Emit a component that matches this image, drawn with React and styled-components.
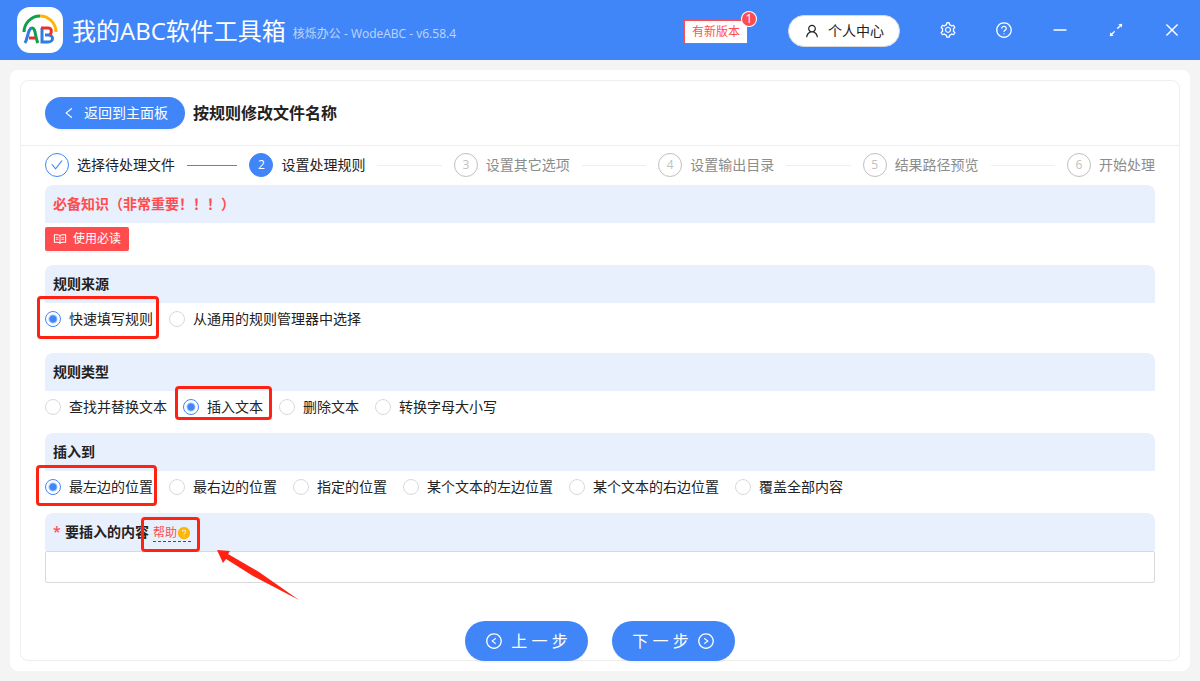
import React, { useState } from "react";
import styled, { createGlobalStyle } from "styled-components";
import {
  AiOutlineArrowsAlt,
  AiOutlineCheck,
  AiOutlineClose,
  AiOutlineLeft,
  AiOutlineLeftCircle,
  AiOutlineMinus,
  AiOutlineQuestionCircle,
  AiOutlineRead,
  AiOutlineRightCircle,
  AiOutlineSetting,
  AiOutlineUser,
  AiFillQuestionCircle,
} from "react-icons/ai";

const steps = [
  "选择待处理文件",
  "设置处理规则",
  "设置其它选项",
  "设置输出目录",
  "结果路径预览",
  "开始处理",
];

const sources = ["快速填写规则", "从通用的规则管理器中选择"];
const types = ["查找并替换文本", "插入文本", "删除文本", "转换字母大小写"];
const positions = [
  "最左边的位置",
  "最右边的位置",
  "指定的位置",
  "某个文本的左边位置",
  "某个文本的右边位置",
  "覆盖全部内容",
];

const Logo = () => (
  <LogoBox>
    <svg width="46" height="46" viewBox="0 0 46 46" fill="none" strokeWidth="3">
      <path d="M7 25 A16 16 0 0 1 23 9" stroke="#0fa04b" />
      <path d="M23 9 A16 16 0 0 1 39 25" stroke="#fbb606" />
      <path d="M8 36 C11 31 11 21 15 21" stroke="#2f7de1" />
      <path d="M15 21 C19 21 18 31 21 36" stroke="#0fa04b" />
      <path d="M12 31 H18" stroke="#ea2f2f" />
      <path d="M25 21 V35 H31 C37 35 37 28 31 28 H28" stroke="#2f7de1" />
      <path d="M24 21 H31 C35 21 35 25 33 28" stroke="#ea2f2f" />
    </svg>
  </LogoBox>
);

const RadioRow = ({ name, options, initial, mark, gap = 10 }) => {
  const [value, setValue] = useState(initial);
  return (
    <Row $gap={gap}>
      {options.map((option) => (
        <RadioLabel key={option}>
          <Radio
            type="radio"
            name={name}
            checked={value === option}
            onChange={() => setValue(option)}
          />
          {option}
          {option === initial && <Mark $inset={mark} />}
        </RadioLabel>
      ))}
    </Row>
  );
};

const App = () => (
  <>
    <GlobalStyle />
    <TopBar>
      <Logo />
      <AppName>我的ABC软件工具箱</AppName>
      <Version>核烁办公 - WodeABC - v6.58.4</Version>
      <UpdateButton type="button">
        有新版本
        <Count>1</Count>
      </UpdateButton>
      <UserButton type="button">
        <AiOutlineUser size={16} />
        个人中心
      </UserButton>
      <IconButton type="button" aria-label="设置"><AiOutlineSetting /></IconButton>
      <IconButton type="button" aria-label="帮助"><AiOutlineQuestionCircle /></IconButton>
      <IconButton type="button" aria-label="最小化"><AiOutlineMinus /></IconButton>
      <IconButton type="button" aria-label="最大化"><AiOutlineArrowsAlt /></IconButton>
      <IconButton type="button" aria-label="关闭"><AiOutlineClose /></IconButton>
    </TopBar>
    <Page>
      <Card>
        <CardHead>
          <BackButton type="button">
            <AiOutlineLeft size={14} />
            返回到主面板
          </BackButton>
          <Title>按规则修改文件名称</Title>
        </CardHead>
        <CardBody>
          <Steps>
            {steps.map((step, i) => (
              <Step key={step}>
                <StepIcon $done={i === 0} $active={i === 1}>
                  {i === 0 ? <AiOutlineCheck size={14} /> : i + 1}
                </StepIcon>
                <StepTitle $wait={i > 1}>{step}</StepTitle>
                {i < steps.length - 1 && <StepLine $done={i === 0} />}
              </Step>
            ))}
          </Steps>

          <SectionHead $danger>必备知识（非常重要！！！）</SectionHead>
          <Row $gap={10}>
            <ReadButton type="button">
              <AiOutlineRead size={14} />
              使用必读
            </ReadButton>
          </Row>

          <SectionHead>规则来源</SectionHead>
          <RadioRow
            name="source"
            options={sources}
            initial="快速填写规则"
            mark="-7px -6px -4px -8px"
            gap={18}
          />

          <SectionHead>规则类型</SectionHead>
          <RadioRow
            name="type"
            options={types}
            initial="插入文本"
            mark="-5px -9px 3px -8px"
          />

          <SectionHead>插入到</SectionHead>
          <RadioRow
            name="position"
            options={positions}
            initial="最左边的位置"
            mark="-6px -4px -3px -9px"
          />

          <SectionHead>
            <Required>*</Required>
            <label htmlFor="content">要插入的内容</label>
            <HelpLink href="#help">
              帮助
              <AiFillQuestionCircle size={14} color="#fbb606" />
              <Mark $inset="-8px -9px -11px -12px" />
              <Arrow width="82" height="50" viewBox="0 0 82 50">
                <path d="M0 0 L13 1 L11 4 L42 22 L82 50 L36 26 L9 9 L6 13 Z" fill="#ff2213" />
              </Arrow>
            </HelpLink>
          </SectionHead>
          <TextInput id="content" type="text" />

          <Footer>
            <NavButton type="button">
              <AiOutlineLeftCircle size={18} />
              上 一 步
            </NavButton>
            <NavButton type="button">
              下 一 步
              <AiOutlineRightCircle size={18} />
            </NavButton>
          </Footer>
        </CardBody>
      </Card>
    </Page>
  </>
);

const GlobalStyle = createGlobalStyle`
  * {
    box-sizing: border-box;
  }

  body {
    margin: 0;
    background: #f4f4f4;
    color: #222;
    font: 14px/22px "Open Sans", "Noto Sans CJK SC", sans-serif;
  }

  button,
  input {
    font: inherit;
  }

  button {
    padding: 0;
    border: none;
    cursor: pointer;
  }
`;

const TopBar = styled.header`
  display: flex;
  align-items: center;
  height: 60px;
  padding-left: 17px;
  background: #4086f8;
  color: #fff;
`;

const LogoBox = styled.div`
  width: 46px;
  height: 46px;
  border-radius: 13px;
  background: #fff;
`;

const AppName = styled.span`
  margin: 2px 0 0 9px;
  font-size: 24px;
  line-height: 36px;
`;

const Version = styled.span`
  margin: 8px auto 0 7px;
  font-size: 12px;
  opacity: 0.65;
`;

const UpdateButton = styled.button`
  position: relative;
  height: 24px;
  margin: 3px 40px 0 0;
  padding: 0 7px;
  border: 1px solid #ff4d4f;
  background: #fff;
  color: #ff4d4f;
  font-size: 12px;
  line-height: 22px;
`;

const Count = styled.span`
  position: absolute;
  top: -9px;
  right: -9px;
  width: 14px;
  height: 14px;
  border-radius: 7px;
  background: #ff4d4f;
  box-shadow: 0 0 0 1px #fff;
  color: #fff;
  line-height: 14px;
  text-align: center;
`;

const UserButton = styled.button`
  display: flex;
  align-items: center;
  justify-content: center;
  gap: 8px;
  width: 112px;
  height: 32px;
  margin: 2px 20px 0 0;
  border: 1px solid #d9d9d9;
  border-radius: 16px;
  background: #fff;
  color: #222;
`;

const IconButton = styled.button`
  display: flex;
  align-items: center;
  justify-content: center;
  width: 56px;
  height: 60px;
  background: none;
  color: #fff;
  font-size: 18px;
`;

const Page = styled.main`
  margin: 10px;
  padding: 10px;
  border-radius: 8px;
  background: #fff;
`;

const Card = styled.section`
  border: 1px solid #eee;
  border-radius: 8px;
`;

const CardHead = styled.div`
  display: flex;
  align-items: center;
  gap: 8px;
  height: 65px;
  padding: 0 24px;
  border-bottom: 1px solid #eee;
`;

const BackButton = styled.button`
  display: flex;
  align-items: center;
  justify-content: center;
  gap: 8px;
  width: 140px;
  height: 32px;
  border-radius: 16px;
  background: #4086f8;
  box-shadow: 0 2px 0 rgba(0, 0, 0, 0.04);
  color: #fff;
`;

const Title = styled.h1`
  margin: 0;
  font-size: 16px;
  font-weight: 600;
`;

const CardBody = styled.div`
  padding: 7px 24px 0;
`;

const Steps = styled.ol`
  display: flex;
  margin: 0 0 8px;
  padding: 0;
  list-style: none;
`;

const Step = styled.li`
  display: flex;
  align-items: center;
  flex: 1;

  &:last-child {
    flex: none;
  }
`;

const StepIcon = styled.span`
  display: flex;
  align-items: center;
  justify-content: center;
  width: 24px;
  height: 24px;
  margin-right: 8px;
  border: 1px solid ${(p) => (p.$done || p.$active ? "#4086f8" : "#bfbfbf")};
  border-radius: 50%;
  background: ${(p) => (p.$active ? "#4086f8" : "#fff")};
  color: ${(p) => (p.$active ? "#fff" : p.$done ? "#4086f8" : "#bfbfbf")};
  font-size: 12px;
`;

const StepTitle = styled.span`
  color: ${(p) => (p.$wait ? "#8c8c8c" : "#222")};
`;

const StepLine = styled.span`
  flex: 1;
  height: 1px;
  margin: 0 12px;
  background: ${(p) => (p.$done ? "#4086f8" : "#eee")};
`;

const SectionHead = styled.div`
  display: flex;
  align-items: center;
  height: 38px;
  padding: 0 8px;
  border-radius: 8px 8px 0 0;
  background: #e8effd;
  color: ${(p) => (p.$danger ? "#ff4d4f" : "#222")};
  font-weight: 600;
`;

const Row = styled.div`
  display: flex;
  align-items: center;
  gap: 16px;
  height: 32px;
  margin-bottom: ${(p) => p.$gap}px;
`;

const ReadButton = styled.button`
  display: flex;
  align-items: center;
  gap: 6px;
  height: 24px;
  padding: 0 8px;
  border-radius: 2px;
  background: #ff4d4f;
  box-shadow: 0 2px 0 rgba(0, 0, 0, 0.04);
  color: #fff;
  font-size: 12px;
`;

const RadioLabel = styled.label`
  position: relative;
  display: flex;
  align-items: center;
  gap: 8px;
  height: 32px;
  cursor: pointer;
`;

const Radio = styled.input`
  appearance: none;
  width: 16px;
  height: 16px;
  margin: 0;
  border: 1px solid #d9d9d9;
  border-radius: 50%;
  background: #fff;

  &:checked {
    border-color: #4086f8;
    background: radial-gradient(circle, #4086f8 3px, #fff 5px);
  }
`;

const Mark = styled.span`
  position: absolute;
  inset: ${(p) => p.$inset};
  border: 3px solid #ff2213;
  border-radius: 4px;
  pointer-events: none;
`;

const Required = styled.span`
  width: 12px;
  color: #ff4d4f;
`;

const HelpLink = styled.a`
  position: relative;
  display: flex;
  align-items: center;
  margin: 2px 0 0 4px;
  border-bottom: 1px dashed #f00;
  color: #ff4d4f;
  font-size: 12px;
  font-weight: 400;
  line-height: 16px;
  text-decoration: none;
`;

const Arrow = styled.svg`
  position: absolute;
  top: 25px;
  left: 64px;
  pointer-events: none;
`;

const TextInput = styled.input`
  display: block;
  width: 100%;
  height: 32px;
  padding: 4px 11px;
  border: 1px solid #d9d9d9;
  border-radius: 2px;
  background: #fff;
  outline: none;
`;

const Footer = styled.div`
  display: flex;
  justify-content: center;
  gap: 24px;
  margin: 38px 0 -1px;
`;

const NavButton = styled.button`
  display: flex;
  align-items: center;
  justify-content: center;
  gap: 8px;
  width: 123px;
  height: 40px;
  border-radius: 20px;
  background: #4086f8;
  box-shadow: 0 2px 0 rgba(0, 0, 0, 0.04);
  color: #fff;
  font-size: 16px;
`;

export default App;
